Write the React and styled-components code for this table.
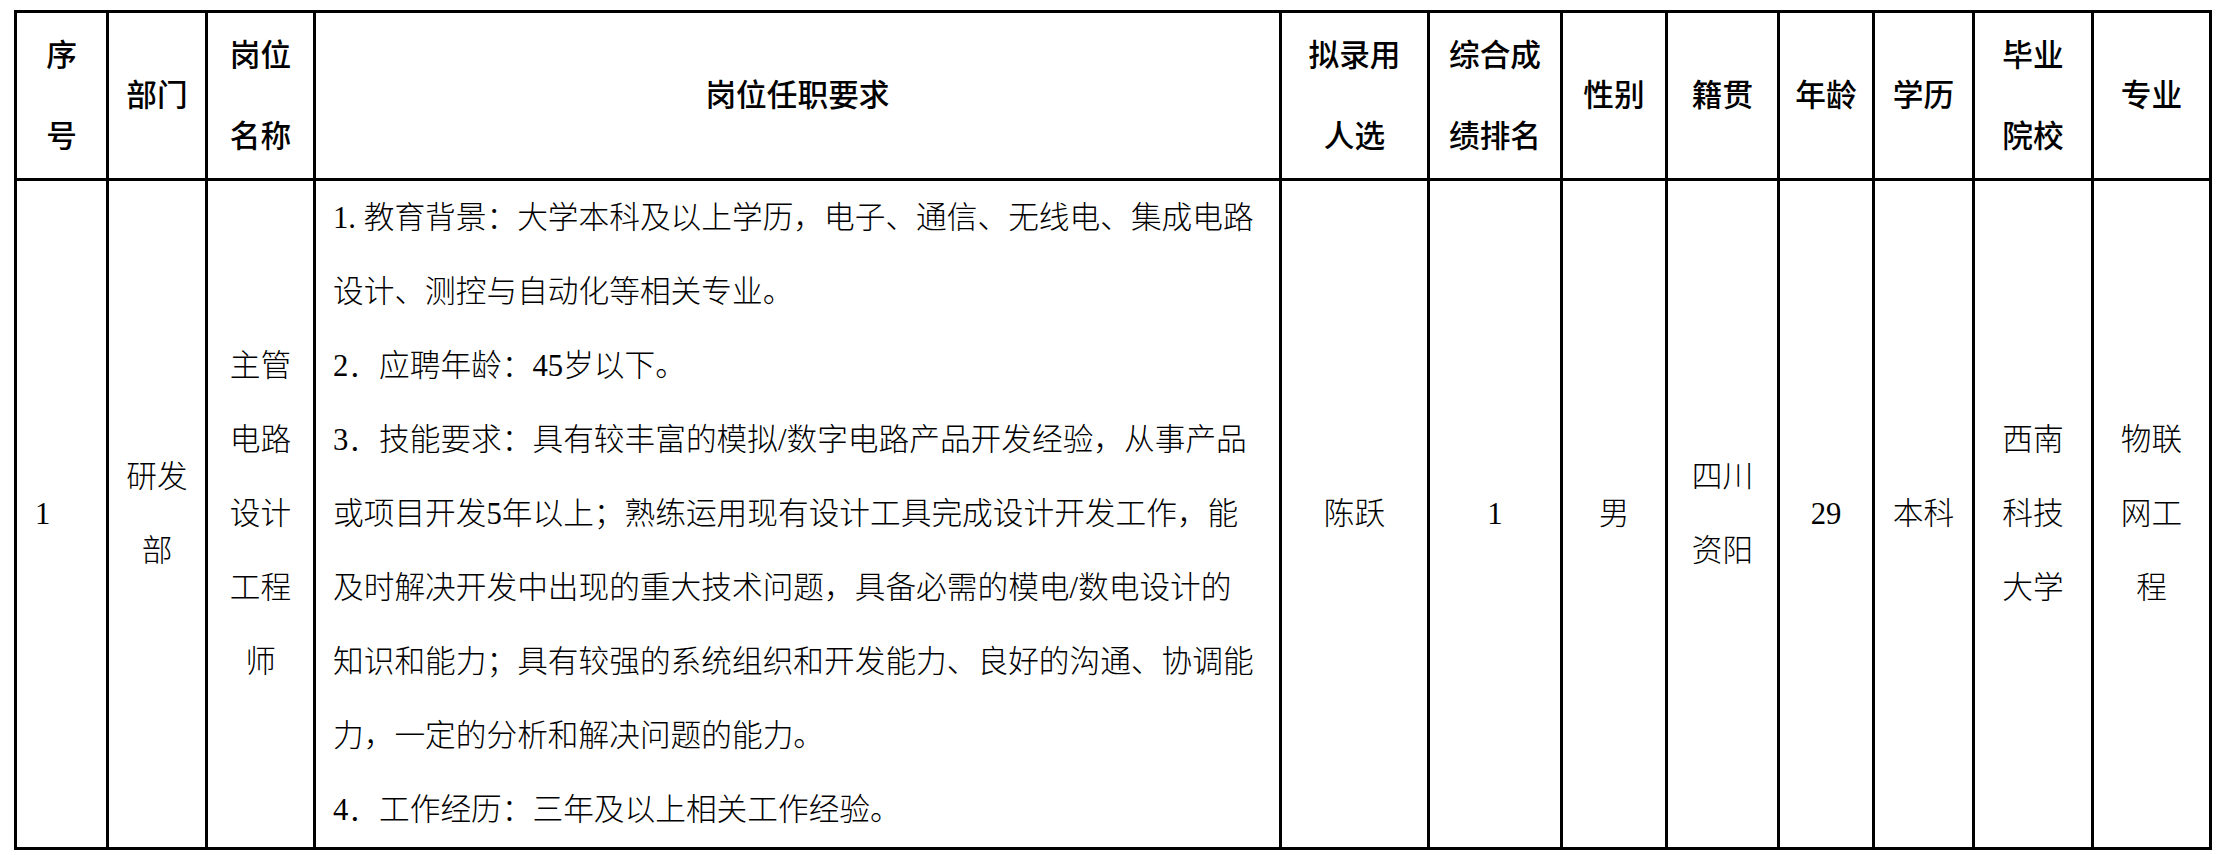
import React from "react";
import styled, { createGlobalStyle } from "styled-components";

const GlobalStyle = createGlobalStyle`
  html, body {
    margin: 0;
    padding: 0;
    background: #ffffff;
  }
  body {
    font-family: "Liberation Serif", "Noto Sans CJK SC", serif;
    color: #000000;
  }
`;

const Page = styled.div`
  padding: 10px 0 0 14px;
`;

const Grid = styled.div`
  display: grid;
  grid-template-columns: ${(p) => p.$cols};
  grid-template-rows: 165px auto;
  gap: 3px;
  padding: 3px;
  background: #000000;
  width: max-content;
`;

const HeadCell = styled.div`
  background: #ffffff;
  display: flex;
  align-items: center;
  justify-content: center;
  text-align: center;
  font-size: 30.7px;
  line-height: 81px;
  font-weight: 500;
  padding-top: 2px;
`;

const BodyCell = styled.div`
  background: #ffffff;
  display: flex;
  align-items: center;
  justify-content: ${(p) => (p.$left ? "flex-start" : "center")};
  text-align: ${(p) => (p.$left ? "left" : "center")};
  padding-left: ${(p) => p.$indent || 0}px;
  font-size: 30.7px;
  line-height: 74px;
  font-weight: 300;
`;

const Description = styled.div`
  background: #ffffff;
  padding-left: 17px;
  font-size: 30.7px;
  line-height: 74px;
  font-weight: 300;
  white-space: nowrap;
`;

const Para = styled.p`
  margin: 0;
`;

const widths = [89, 96, 105, 963, 145, 130, 102, 109, 92, 97, 116, 115];

const headers = [
  ["序", "号"],
  ["部门"],
  ["岗位", "名称"],
  ["岗位任职要求"],
  ["拟录用", "人选"],
  ["综合成", "绩排名"],
  ["性别"],
  ["籍贯"],
  ["年龄"],
  ["学历"],
  ["毕业", "院校"],
  ["专业"],
];

const requirements = [
  ["1. 教育背景：大学本科及以上学历，电子、通信、无线电、集成电路", "设计、测控与自动化等相关专业。"],
  ["2．应聘年龄：45岁以下。"],
  [
    "3．技能要求：具有较丰富的模拟/数字电路产品开发经验，从事产品",
    "或项目开发5年以上；熟练运用现有设计工具完成设计开发工作，能",
    "及时解决开发中出现的重大技术问题，具备必需的模电/数电设计的",
    "知识和能力；具有较强的系统组织和开发能力、良好的沟通、协调能",
    "力，一定的分析和解决问题的能力。",
  ],
  ["4．工作经历：三年及以上相关工作经验。"],
];

const Lines = ({ lines }) =>
  lines.map((l, i) => (
    <React.Fragment key={i}>
      {i > 0 && <br />}
      {l}
    </React.Fragment>
  ));

export default function App() {
  return (
    <>
      <GlobalStyle />
      <Page>
        <Grid $cols={widths.map((w) => `${w}px`).join(" ")}>
          {headers.map((h, i) => (
            <HeadCell key={i}>
              <div>
                <Lines lines={h} />
              </div>
            </HeadCell>
          ))}

          <BodyCell $left $indent={18}>1</BodyCell>
          <BodyCell>
            <div>
              <Lines lines={["研发", "部"]} />
            </div>
          </BodyCell>
          <BodyCell>
            <div>
              <Lines lines={["主管", "电路", "设计", "工程", "师"]} />
            </div>
          </BodyCell>
          <Description>
            {requirements.map((p, i) => (
              <Para key={i}>
                <Lines lines={p} />
              </Para>
            ))}
          </Description>
          <BodyCell>陈跃</BodyCell>
          <BodyCell>1</BodyCell>
          <BodyCell>男</BodyCell>
          <BodyCell>
            <div>
              <Lines lines={["四川", "资阳"]} />
            </div>
          </BodyCell>
          <BodyCell>29</BodyCell>
          <BodyCell>本科</BodyCell>
          <BodyCell>
            <div>
              <Lines lines={["西南", "科技", "大学"]} />
            </div>
          </BodyCell>
          <BodyCell>
            <div>
              <Lines lines={["物联", "网工", "程"]} />
            </div>
          </BodyCell>
        </Grid>
      </Page>
    </>
  );
}
